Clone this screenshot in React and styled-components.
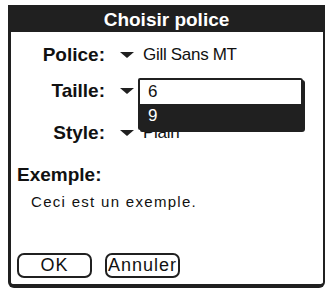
import styled, { createGlobalStyle } from 'styled-components';

const INK = '#202020';

const GlobalStyle = createGlobalStyle`
	html, body {
		margin: 0;
		padding: 0;
		background: #fff;
	}
	body {
		font-family: 'Liberation Sans', Arial, sans-serif;
		color: #111;
	}
`;

const Page = styled.div`
	padding: 5px 0 0 8px;
`;

const Dialog = styled.div`
	width: 317px;
	display: flex;
	flex-direction: column;
`;

const TitleBar = styled.div`
	height: 27px;
	box-sizing: border-box;
	padding-top: 2px;
	line-height: 25px;
	background: ${INK};
	color: #fff;
	font-weight: bold;
	font-size: 19px;
	text-align: center;
`;

const Body = styled.div`
	height: 256px;
	box-sizing: border-box;
	border: 3px solid ${INK};
	border-right-width: 2px;
	border-top: none;
	border-bottom-width: 4px;
	border-radius: 0 0 6px 6px;
	display: flex;
	flex-direction: column;
`;

const Row = styled.div`
	position: relative;
	height: 24px;
	margin-top: ${(p) => p.$space}px;
	display: flex;
	align-items: center;
`;

const Label = styled.div`
	width: 94px;
	text-align: right;
	font-weight: bold;
	font-size: 19px;
	line-height: 24px;
`;

const Arrow = styled.span`
	margin-left: 15px;
	width: 0;
	height: 0;
	border-left: 7px solid transparent;
	border-right: 7px solid transparent;
	border-top: 6px solid ${INK};
`;

const Value = styled.div`
	margin-left: 9px;
	font-size: 17px;
	letter-spacing: -0.3px;
	line-height: 24px;
`;

// open popup list, drawn over the rows below
const List = styled.div`
	position: absolute;
	left: 127px;
	top: -1px;
	width: 165px;
	box-sizing: border-box;
	border: 2px solid ${INK};
	border-radius: 2px 3px 3px 2px;
	background: #fff;
	box-shadow: 2px 2px 0 ${INK};
	z-index: 2;
`;

const ListItem = styled.div`
	height: 24px;
	line-height: 23px;
	padding-left: 8px;
	font-size: 17px;
	background: ${(p) => (p.$selected ? INK : '#fff')};
	color: ${(p) => (p.$selected ? '#fff' : '#111')};
`;

const Heading = styled.div`
	margin-top: 18px;
	padding-left: 6px;
	font-weight: bold;
	font-size: 19px;
	line-height: 24px;
`;

const Sample = styled.div`
	margin-top: 5px;
	padding-left: 20px;
	font-size: 15px;
	letter-spacing: 1.3px;
	line-height: 20px;
`;

const Buttons = styled.div`
	margin-top: auto;
	padding: 0 0 6px 6px;
	display: flex;
	gap: 13px;
`;

const Button = styled.button`
	width: 75px;
	height: 25px;
	box-sizing: border-box;
	padding: 0;
	border: 2px solid ${INK};
	border-radius: 7px;
	background: #fff;
	color: #111;
	font-family: 'Liberation Sans', Arial, sans-serif;
	font-size: 18px;
	letter-spacing: 1px;
	line-height: 21px;
`;

const fields = [
	{ label: 'Police:', value: 'Gill Sans MT', space: 11 },
	{ label: 'Taille:', value: '6', space: 12, list: ['6', '9'] },
	{ label: 'Style:', value: 'Plain', space: 18 },
];

export default function App() {
	return (
		<>
			<GlobalStyle />
			<Page>
				<Dialog>
					<TitleBar>Choisir police</TitleBar>
					<Body>
						{fields.map((f) => (
							<Row key={f.label} $space={f.space}>
								<Label>{f.label}</Label>
								<Arrow />
								{f.list ? (
									<List>
										{f.list.map((item, i) => (
											<ListItem key={item} $selected={i === 1}>
												{item}
											</ListItem>
										))}
									</List>
								) : (
									<Value>{f.value}</Value>
								)}
							</Row>
						))}
						<Heading>Exemple:</Heading>
						<Sample>Ceci est un exemple.</Sample>
						<Buttons>
							<Button>OK</Button>
							<Button>Annuler</Button>
						</Buttons>
					</Body>
				</Dialog>
			</Page>
		</>
	);
}
